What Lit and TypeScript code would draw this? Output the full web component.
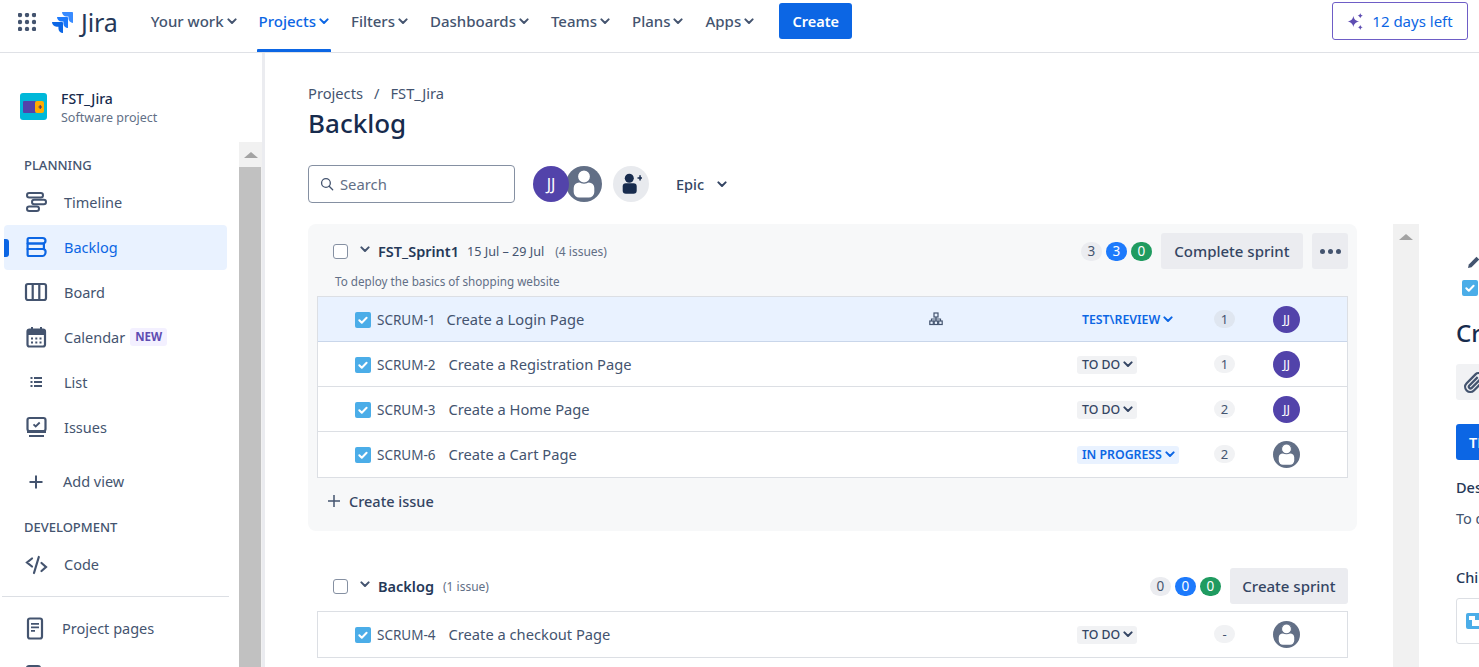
import { LitElement, html, css, svg } from "lit";
import { customElement } from "lit/decorators.js";

const chev = (cls = "chev") => html`<svg class=${cls} viewBox="0 0 10 7" aria-hidden="true"><path d="M1.400 1.400 5 5l3.600-3.600" fill="none" stroke="currentColor" stroke-width="2" stroke-linecap="round" stroke-linejoin="round"/></svg>`;

const icons: Record<string, unknown> = {
  timeline: svg`<g fill="none" stroke="currentColor" stroke-width="2"><rect x="3" y="3" width="16" height="4.500" rx="2.250"/><rect x="8" y="9.800" width="14" height="4.500" rx="2.250"/><rect x="3" y="16.600" width="12" height="4.500" rx="2.250"/></g>`,
  backlog: svg`<g fill="none" stroke="currentColor" stroke-width="2.200" stroke-linejoin="round"><path d="M5 3h13.500c2 0 3 1.200 3 2.800S20.500 8.500 18.500 8.500H3.600V4.500C3.600 3.500 4 3 5 3Z"/><path d="M3.600 8.500h16.300v5.500H3.600z"/><path d="M3.600 14h15c2 0 3 1.200 3 2.800s-1 4.200-3 4.200H5c-1 0-1.400-.5-1.400-1.500z"/></g>`,
  board: svg`<g fill="none" stroke="currentColor" stroke-width="2.200"><rect x="2" y="4" width="20" height="16" rx="2"/><path d="M8.700 4v16M15.300 4v16"/></g>`,
  calendar: svg`<rect x="3.500" y="4.500" width="17.500" height="17" rx="2" fill="none" stroke="currentColor" stroke-width="2.200"/><path d="M3.500 5h18v5h-18zM7 2h2v4H7zM16 2h2v4h-2z" fill="currentColor"/><path d="M7 12.500h2v2H7zM11.300 12.500h2v2h-2zM15.500 12.500h2v2h-2zM7 16.500h2v2H7zM11.300 16.500h2v2h-2zM15.500 16.500h2v2h-2z" fill="currentColor"/>`,
  list: svg`<path d="M6.500 7h2v2h-2zM6.500 11h2v2h-2zM6.500 15h2v2h-2zM10 7h8v2h-8zM10 11h8v2h-8zM10 15h8v2h-8z" fill="currentColor"/>`,
  issues: svg`<rect x="3.500" y="3" width="18" height="13" rx="2" fill="none" stroke="currentColor" stroke-width="2.200"/><path d="m9.500 9.300 2.200 2.200 4-4" fill="none" stroke="currentColor" stroke-width="1.800"/><path d="M3 16h19v2H3zM5 20h15v2H5z" fill="currentColor"/>`,
  plus: svg`<path d="M5.500 13h13M12 6.500v13" fill="none" stroke="currentColor" stroke-width="2"/>`,
  code: svg`<g fill="none" stroke="currentColor" stroke-width="2.200" stroke-linecap="round"><path d="M8 6.500 3 10.500l5 4M17.500 11l4.500 4-4.500 4M14.800 5 10 21"/></g>`,
  page: svg`<rect x="4" y="2.500" width="14" height="20" rx="2" fill="none" stroke="currentColor" stroke-width="2.200"/><path d="M7 7h8v1.800H7zM7 10.500h8v1.800H7zM7 14h4v1.800H7z" fill="currentColor"/>`,
  form: svg`<rect x="3" y="2" width="13" height="20" rx="2" fill="none" stroke="currentColor" stroke-width="2.200"/><path d="M17 3h4v5h-4zM6 6h7v2H6z" fill="currentColor"/>`,
};

const icon = (name: string) => html`<svg class="nav-icon" viewBox="0 0 24 24" aria-hidden="true">${icons[name]}</svg>`;

const person = (cls: string) => html`<svg class=${cls} viewBox="0 0 36 36" aria-hidden="true"><circle cx="18" cy="18" r="18" fill="#626f86"/><rect x="7.700" y="16.500" width="20.600" height="15" rx="5.500" fill="#fff"/><circle cx="18" cy="10.500" r="6.600" fill="#fff" stroke="#626f86" stroke-width="1.400"/></svg>`;

const checkbox = () => html`<svg class="tick" viewBox="0 0 16 16" aria-hidden="true"><rect width="16" height="16" rx="2" fill="#4bade8"/><path d="m4.300 8.200 2.500 2.500 4.800-5" fill="none" stroke="#fff" stroke-width="2" stroke-linecap="round" stroke-linejoin="round"/></svg>`;

type Issue = { key: string; title: string; status: string; blue?: boolean; count: string; jj: boolean; selected?: boolean; child?: boolean };

const sprintIssues: Issue[] = [
  { key: "SCRUM-1", title: "Create a Login Page", status: "TEST\\REVIEW", blue: true, count: "1", jj: true, selected: true, child: true },
  { key: "SCRUM-2", title: "Create a Registration Page", status: "TO DO", count: "1", jj: true },
  { key: "SCRUM-3", title: "Create a Home Page", status: "TO DO", count: "2", jj: true },
  { key: "SCRUM-6", title: "Create a Cart Page", status: "IN PROGRESS", blue: true, count: "2", jj: false },
];

@customElement("app-root")
export class AppRoot extends LitElement {
  static styles = css`
    :host { display: block; height: 667px; overflow: hidden; background: #fff; color: #172b4d;
      font-family: "Noto Sans", "Liberation Sans", sans-serif; font-size: 14px; }
    * { box-sizing: border-box; }
    svg { display: block; flex: none; }

    .topbar { height: 53px; border-bottom: 1.500px solid #dfe1e6; display: flex; align-items: flex-start; }
    .apps { width: 18px; height: 18px; margin: 13px 0 0 18px; }
    .jira-mark { width: 21px; height: 21px; margin: 12px 0 0 16px; }
    .jira-word { margin: 0 0 0 8px; font-size: 25px; line-height: 44px; color: #253858; letter-spacing: -.1px; font-weight: 400; }
    .menu { display: flex; margin-left: 31px; }
    .menu-item { height: 52px; display: flex; align-items: center; gap: 3px; padding: 0 2px 10px; font-size: 15px; color: #44546f; font-weight: 500; position: relative; margin-left: 18px; }
    .menu-item:first-child { margin-left: 0; }
    .menu-item.on { color: #0c66e4; }
    .menu-item.on::after { content: ""; position: absolute; left: 0; right: 0; bottom: 0; height: 3px; background: #0c66e4; border-radius: 1px 1px 0 0; }
    .chev { width: 10px; height: 7px; }
    .create { margin: 3px 0 0 23px; width: 73px; height: 36px; border-radius: 3px; background: #0c66e4; color: #fff; font-weight: 600; font-size: 14.500px; display: flex; align-items: center; justify-content: center; }
    .trial { margin: 2px 11px 0 auto; width: 136px; height: 38px; border: 1px solid #6e5dc6; border-radius: 3px; display: flex; align-items: center; justify-content: center; gap: 8px; font-size: 15px; color: #0c66e4; }
    .trial svg { width: 17px; height: 17px; }

    .body { display: flex; height: 614px; }
    .sidebar { width: 265px; flex: none; display: flex; border-right: 3px solid #ebecf0; overflow: hidden; }
    .side-main { width: 239px; flex: none; }
    .scrollbar { background: #f1f1f1; display: flex; flex-direction: column; }
    .side-bar { width: 23px; margin-top: 89px; }
    .scroll-up { height: 25px; display: flex; align-items: center; justify-content: center; flex: none; }
    .scroll-up i { display: block; width: 0; height: 0; border-left: 7px solid transparent; border-right: 7px solid transparent; border-bottom: 6px solid #a3a3a3; }
    .thumb { flex: 1; background: #c1c1c1; margin: 0 1px 0 0; }

    .project { margin: 40px 0 0 20px; display: flex; gap: 14px; height: 27px; align-items: center; }
    .project-logo { width: 27px; height: 27px; border-radius: 3px; background: #00b8d9; display: flex; align-items: center; justify-content: center; }
    .project-logo svg { width: 21px; height: 12px; }
    .project-text { padding-top: 2px; }
    .project-name { font-size: 14px; font-weight: 500; line-height: 19px; }
    .project-type { font-size: 12.500px; color: #626f86; line-height: 19px; }
    .section { margin-left: 24px; height: 20px; line-height: 20px; font-size: 13px; font-weight: 500; color: #44546f; }
    .s1 { margin-top: 35px; }
    .s2 { margin-top: 13px; }
    .item { position: relative; margin-left: 4px; width: 223px; height: 45px; padding: 0 0 2px 20px; display: flex; align-items: center; gap: 16px; font-size: 14.500px; color: #44546f; border-radius: 4px; }
    .nav-icon { width: 24px; height: 24px; }
    .item.on { background: #e9f2ff; color: #0c66e4; }
    .item.on::before { content: ""; position: absolute; left: 0; top: 14px; width: 5px; height: 18px; border-radius: 0 3px 3px 0; background: #0c66e4; }
    .g1 { margin-top: 5px; }
    .add { margin-top: 9px; gap: 15px; }
    .divider { margin: 9px 0 9px 2px; width: 227px; height: 1px; background: #dcdfe4; }
    .pages { gap: 14px; }
    .last { padding-top: 6px; }
    .new { margin-left: -11px; font-size: 11.500px; font-weight: 700; color: #5e4db2; background: #f3f0ff; border-radius: 3px; padding: 0 5px; line-height: 18px; }

    .main { flex: 1; min-width: 0; padding-left: 43px; overflow: hidden; }
    .crumbs { margin-top: 30px; height: 20px; line-height: 20px; font-size: 14.700px; color: #44546f; display: flex; gap: 11px; }
    h1 { margin: 2px 0 0; font-size: 26px; line-height: 36px; font-weight: 500; color: #172b4d; }
    .filters { margin-top: 24px; display: flex; align-items: center; height: 38px; }
    .search { width: 207px; height: 38px; border: 1px solid #8590a2; border-radius: 4px; display: flex; align-items: center; gap: 6px; padding-left: 11px; color: #626f86; font-size: 14.800px; }
    .search svg { width: 14px; height: 14px; }
    .av-lg { width: 36px; height: 36px; border-radius: 50%; background: #5243aa; color: #fff; font-size: 16px; display: flex; align-items: center; justify-content: center; margin-left: 18px; position: relative; z-index: 1; }
    .av-person { width: 36px; height: 36px; margin-left: -3px; }
    .add-user { width: 36px; height: 36px; margin-left: 11px; border-radius: 50%; background: #e8eaee; display: flex; align-items: center; justify-content: center; }
    .add-user svg { width: 22px; height: 22px; }
    .epic { margin-left: 27px; font-size: 14.500px; font-weight: 500; color: #344563; display: flex; align-items: center; gap: 13px; }

    .work { display: flex; margin-top: 21px; }
    .lists { width: 1049px; flex: none; }
    .main-bar { width: 26px; margin-left: 36px; height: 500px; flex: none; }
    .detail { flex: none; margin-left: 37px; width: 300px; white-space: nowrap; }

    .sprint { height: 307px; background: #f7f8f9; border-radius: 8px; padding: 9px 9px 0; }
    .head { display: flex; align-items: center; height: 36px; padding-left: 16px; }
    .box { width: 15px; height: 15px; border: 1.500px solid #8590a2; border-radius: 3px; background: #fff; flex: none; }
    .head .chev { margin: -3px 8px 0 12px; color: #44546f; }
    .name { font-size: 14.500px; font-weight: 600; color: #253858; }
    .dates { margin-left: 8px; font-size: 12.600px; color: #44546f; }
    .n { margin-left: 11px; font-size: 12px; color: #626f86; }
    .back-n { margin-left: 9px; }
    .badges { margin-left: auto; display: flex; gap: 4px; margin-right: 9px; }
    .badge { width: 21px; height: 19px; border-radius: 10px; display: flex; align-items: center; justify-content: center; font-size: 13.500px; color: #44546f; background: #ebecf0; }
    .badge.blue { background: #1d7afc; color: #fff; }
    .badge.green { background: #1f9b60; color: #fff; }
    .btn { height: 36px; padding: 0 13px; background: #ebecf0; border-radius: 3px; display: flex; align-items: center; font-size: 15px; font-weight: 500; color: #344563; }
    .btn.complete { padding: 0 13.500px; }
    .btn.new-sprint { padding: 0 12.500px; }
    .dots { width: 36px; margin-left: 9px; justify-content: center; gap: 3px; padding: 0; }
    .dots i { width: 5px; height: 5px; border-radius: 50%; background: #44546f; display: block; }
    .goal { margin: 3px 0 0 18px; height: 18px; line-height: 18px; font-size: 11.700px; color: #626f86; }
    .rows { margin-top: 6px; background: #fff; border: 1px solid #dcdfe4; }
    .row { height: 45px; display: flex; align-items: center; padding-left: 37px; border-bottom: 1px solid #dcdfe4; }
    .row:last-child { border-bottom: 0; padding-bottom: 1px; }
    .row.sel { background: #e9f2ff; border-bottom-color: #c9d6ea; }
    .tick { width: 16px; height: 16px; }
    .row .tick { margin-top: 2px; }
    .key { margin: 2px 0 0 6px; font-size: 13.500px; font-weight: 400; color: #44546f; }
    .title { margin-left: 13px; flex: 1; font-size: 14.700px; color: #44546f; }
    .sel .title { margin-left: 11px; }
    .link-col { width: 149px; flex: none; color: #44546f; }
    .link-col svg { width: 16px; height: 16px; }
    .status-col { width: 137px; flex: none; }
    .status { display: inline-flex; align-items: center; gap: 3px; height: 18px; padding: 0 4px 0 5px; border-radius: 3px; background: #f1f2f4; color: #344563; font-size: 12.300px; font-weight: 500; white-space: nowrap; }
    .status .chev { width: 10px; height: 7px; }
    .status.blue { background: #e9f2ff; color: #0c66e4; font-weight: 600; }
    .sel .status.blue { background: transparent; }
    .count { width: 21px; height: 18px; flex: none; border-radius: 9px; background: #f1f2f4; display: flex; align-items: center; justify-content: center; font-size: 13px; color: #44546f; }
    .sel .count { background: #dfe6f0; }
    .av-sm { margin-left: 38px; width: 27px; height: 27px; border-radius: 50%; background: #5243aa; color: #fff; font-size: 13px; flex: none; display: flex; align-items: center; justify-content: center; margin-right: 47px; }
    .av-person-sm { margin-left: 38px; width: 27px; height: 27px; margin-right: 47px; }
    .create-issue { margin: 6px 0 0 10px; height: 34px; display: flex; align-items: center; gap: 8px; font-size: 14.500px; font-weight: 500; color: #344563; }
    .create-issue svg { width: 14px; height: 14px; }

    .backlog { padding: 37px 9px 0; }
    .backlog .rows { margin-top: 7px; }

    .pencil { width: 14px; height: 14px; margin: 31px 0 0 11px; color: #44546f; }
    .d-tick { margin: 11px 0 0 6px; }
    .d-title { font-size: 24px; font-weight: 500; margin: 18px 0 0; line-height: 38px; height: 38px; }
    .d-tool { width: 100px; height: 36px; margin-top: 12px; background: #f1f2f4; border-radius: 3px; display: flex; align-items: center; padding-left: 6px; color: #44546f; }
    .d-tool svg { width: 25px; height: 25px; }
    .d-status { width: 100px; height: 36px; margin-top: 24px; background: #0c66e4; border-radius: 3px; color: #fff; font-weight: 600; font-size: 14.500px; display: flex; align-items: center; padding-left: 13px; }
    .d-label { font-size: 14.500px; font-weight: 500; color: #253858; height: 20px; line-height: 20px; }
    .d-desc { margin-top: 17px; }
    .d-text { margin-top: 11px; font-size: 14.500px; color: #44546f; line-height: 20px; }
    .d-child { margin-top: 39px; }
    .d-card { margin-top: 11px; width: 200px; height: 46px; border: 1px solid #dcdfe4; border-radius: 3px; display: flex; align-items: center; padding-left: 9px; }
    .d-card svg { width: 16px; height: 16px; }
  `;

  private row(i: Issue) {
    return html`<div class="row ${i.selected ? "sel" : ""}">
      ${checkbox()}
      <span class="key">${i.key}</span>
      <span class="title">${i.title}</span>
      <span class="link-col">${i.child ? html`<svg viewBox="0 0 16 16" aria-hidden="true"><g fill="none" stroke="currentColor" stroke-width="1.200"><rect x="6" y="2" width="4" height="4"/><rect x="1.800" y="10" width="3.500" height="3.500"/><rect x="6.200" y="10" width="3.500" height="3.500"/><rect x="10.700" y="10" width="3.500" height="3.500"/><path d="M8 6v4M3.500 10V8h9v2"/></g></svg>` : ""}</span>
      <span class="status-col"><span class="status ${i.blue ? "blue" : ""}">${i.status}${chev()}</span></span>
      <span class="count">${i.count}</span>
      ${i.jj ? html`<span class="av-sm">JJ</span>` : person("av-person-sm")}
    </div>`;
  }

  render() {
    const menu = ["Your work", "Projects", "Filters", "Dashboards", "Teams", "Plans", "Apps"];
    return html`
      <header class="topbar">
        <svg class="apps" viewBox="0 0 18 18" fill="#44546f" aria-hidden="true">
          ${[2, 9, 16].flatMap((y) => [2, 9, 16].map((x) => svg`<circle cx=${x} cy=${y} r="2.200"/>`))}
        </svg>
        <svg class="jira-mark" viewBox="0 0 24 24" aria-hidden="true">
          <path fill="#0c66e4" d="M11.571 11.513H0a5.218 5.218 0 0 0 5.232 5.215h2.13v2.057A5.215 5.215 0 0 0 12.575 24V12.518a1.005 1.005 0 0 0-1.005-1.005z"/>
          <path fill="#1d7afc" d="M17.294 5.757H5.736a5.215 5.215 0 0 0 5.215 5.214h2.129v2.058a5.218 5.218 0 0 0 5.215 5.214V6.758a1.001 1.001 0 0 0-1.001-1.001z"/>
          <path fill="#388bff" d="M23.013 0H11.455a5.215 5.215 0 0 0 5.215 5.215h2.129v2.057A5.215 5.215 0 0 0 24 12.483V1.005A1.001 1.001 0 0 0 23.013 0Z"/>
        </svg>
        <span class="jira-word">Jira</span>
        <nav class="menu">
          ${menu.map((m) => html`<span class="menu-item ${m === "Projects" ? "on" : ""}">${m}${chev()}</span>`)}
        </nav>
        <span class="create">Create</span>
        <span class="trial">
          <svg viewBox="0 0 16 16" fill="#5e4db2" aria-hidden="true"><path d="M6 2.500c.5 3.300 2 4.800 5.500 5.500C8 8.700 6.500 10.200 6 13.500 5.500 10.200 4 8.700.5 8 4 7.300 5.500 5.800 6 2.500ZM12.500 0c.3 1.500.9 2.100 2.500 2.500-1.600.4-2.200 1-2.500 2.500-.3-1.500-.9-2.100-2.500-2.500 1.600-.4 2.200-1 2.500-2.500ZM12.500 11c.3 1.500.9 2.100 2.500 2.500-1.600.4-2.200 1-2.500 2.500-.3-1.500-.9-2.100-2.500-2.500 1.600-.4 2.200-1 2.500-2.500Z"/></svg>
          12 days left
        </span>
      </header>
      <div class="body">
        <aside class="sidebar">
          <div class="side-main">
            <div class="project">
              <span class="project-logo"><svg viewBox="0 0 21 12" aria-hidden="true"><rect width="13" height="12" rx="1" fill="#5243aa"/><rect x="12" width="9" height="12" rx="2" fill="#ffab00"/><path d="M15.500 5.500h1.200V4h1v1.500h1.300v1h-1.300V8h-1V6.500h-1.200z" fill="#42256e"/></svg></span>
              <div class="project-text"><div class="project-name">FST_Jira</div><div class="project-type">Software project</div></div>
            </div>
            <div class="section s1">PLANNING</div>
            <div class="item g1">${icon("timeline")}<span>Timeline</span></div>
            <div class="item on">${icon("backlog")}<span>Backlog</span></div>
            <div class="item">${icon("board")}<span>Board</span></div>
            <div class="item">${icon("calendar")}<span>Calendar</span><span class="new">NEW</span></div>
            <div class="item">${icon("list")}<span>List</span></div>
            <div class="item">${icon("issues")}<span>Issues</span></div>
            <div class="item add">${icon("plus")}<span>Add view</span></div>
            <div class="section s2">DEVELOPMENT</div>
            <div class="item g1">${icon("code")}<span>Code</span></div>
            <div class="divider"></div>
            <div class="item pages">${icon("page")}<span>Project pages</span></div>
            <div class="item last">${icon("form")}</div>
          </div>
          <div class="scrollbar side-bar"><span class="scroll-up"><i></i></span><span class="thumb"></span></div>
        </aside>
        <main class="main">
          <div class="crumbs"><span>Projects</span><span>/</span><span>FST_Jira</span></div>
          <h1>Backlog</h1>
          <div class="filters">
            <div class="search"><svg viewBox="0 0 16 16" aria-hidden="true"><circle cx="6.800" cy="6.800" r="5" fill="none" stroke="#44546f" stroke-width="1.500"/><path d="m10.500 10.500 4 4" stroke="#44546f" stroke-width="1.500" stroke-linecap="round"/></svg>Search</div>
            <span class="av-lg">JJ</span>
            ${person("av-person")}
            <span class="add-user"><svg viewBox="0 0 22 22" fill="#172b4d" aria-hidden="true"><circle cx="9.300" cy="5.300" r="4.500"/><rect x="2.700" y="10.300" width="14" height="10.500" rx="3.200"/><path d="M17.500 4.200h1.800V2.300h1.500v1.900h1.200v1.500h-1.200v1.900h-1.500V5.700h-1.800z"/></svg></span>
            <span class="epic">Epic ${chev()}</span>
          </div>
          <div class="work">
            <div class="lists">
              <section class="sprint">
                <div class="head">
                  <span class="box"></span>${chev()}
                  <span class="name">FST_Sprint1</span>
                  <span class="dates">15 Jul – 29 Jul</span>
                  <span class="n">(4 issues)</span>
                  <span class="badges"><span class="badge">3</span><span class="badge blue">3</span><span class="badge green">0</span></span>
                  <span class="btn complete">Complete sprint</span>
                  <span class="btn dots"><i></i><i></i><i></i></span>
                </div>
                <div class="goal">To deploy the basics of shopping website</div>
                <div class="rows">${sprintIssues.map((i) => this.row(i))}</div>
                <div class="create-issue"><svg viewBox="0 0 14 14" aria-hidden="true"><path d="M7 1v12M1 7h12" stroke="#44546f" stroke-width="1.500"/></svg>Create issue</div>
              </section>
              <section class="backlog">
                <div class="head">
                  <span class="box"></span>${chev()}
                  <span class="name">Backlog</span>
                  <span class="n back-n">(1 issue)</span>
                  <span class="badges"><span class="badge">0</span><span class="badge blue">0</span><span class="badge green">0</span></span>
                  <span class="btn new-sprint">Create sprint</span>
                </div>
                <div class="rows">${this.row({ key: "SCRUM-4", title: "Create a checkout Page", status: "TO DO", count: "-", jj: false })}</div>
              </section>
            </div>
            <div class="scrollbar main-bar"><span class="scroll-up"><i></i></span></div>
            <div class="detail">
              <svg class="pencil" viewBox="0 0 14 14" aria-hidden="true"><path d="M1 13l.8-3.500L9.500 1.800l2.700 2.700-7.700 7.700z" fill="currentColor"/></svg>
              <div class="d-tick">${checkbox()}</div>
              <div class="d-title">Create a Login Page</div>
              <div class="d-tool"><svg viewBox="0 0 22 22" aria-hidden="true"><path d="M18 10.500 10.500 18a4.500 4.500 0 0 1-6.400-6.400l8-8a3 3 0 0 1 4.300 4.300l-8 8a1.500 1.500 0 0 1-2.100-2.100l7.500-7.500" fill="none" stroke="currentColor" stroke-width="2"/></svg></div>
              <div class="d-status">TEST\\REVIEW</div>
              <div class="d-label d-desc">Description</div>
              <div class="d-text">To deploy the login page</div>
              <div class="d-label d-child">Child issues</div>
              <div class="d-card"><svg viewBox="0 0 16 16" aria-hidden="true"><rect width="16" height="16" rx="2" fill="#4bade8"/><path d="M3 3h6v4H3z" fill="#fff"/><path d="M6 7h7v6H6z" fill="#fff"/></svg></div>
            </div>
          </div>
        </main>
      </div>
    `;
  }
}
